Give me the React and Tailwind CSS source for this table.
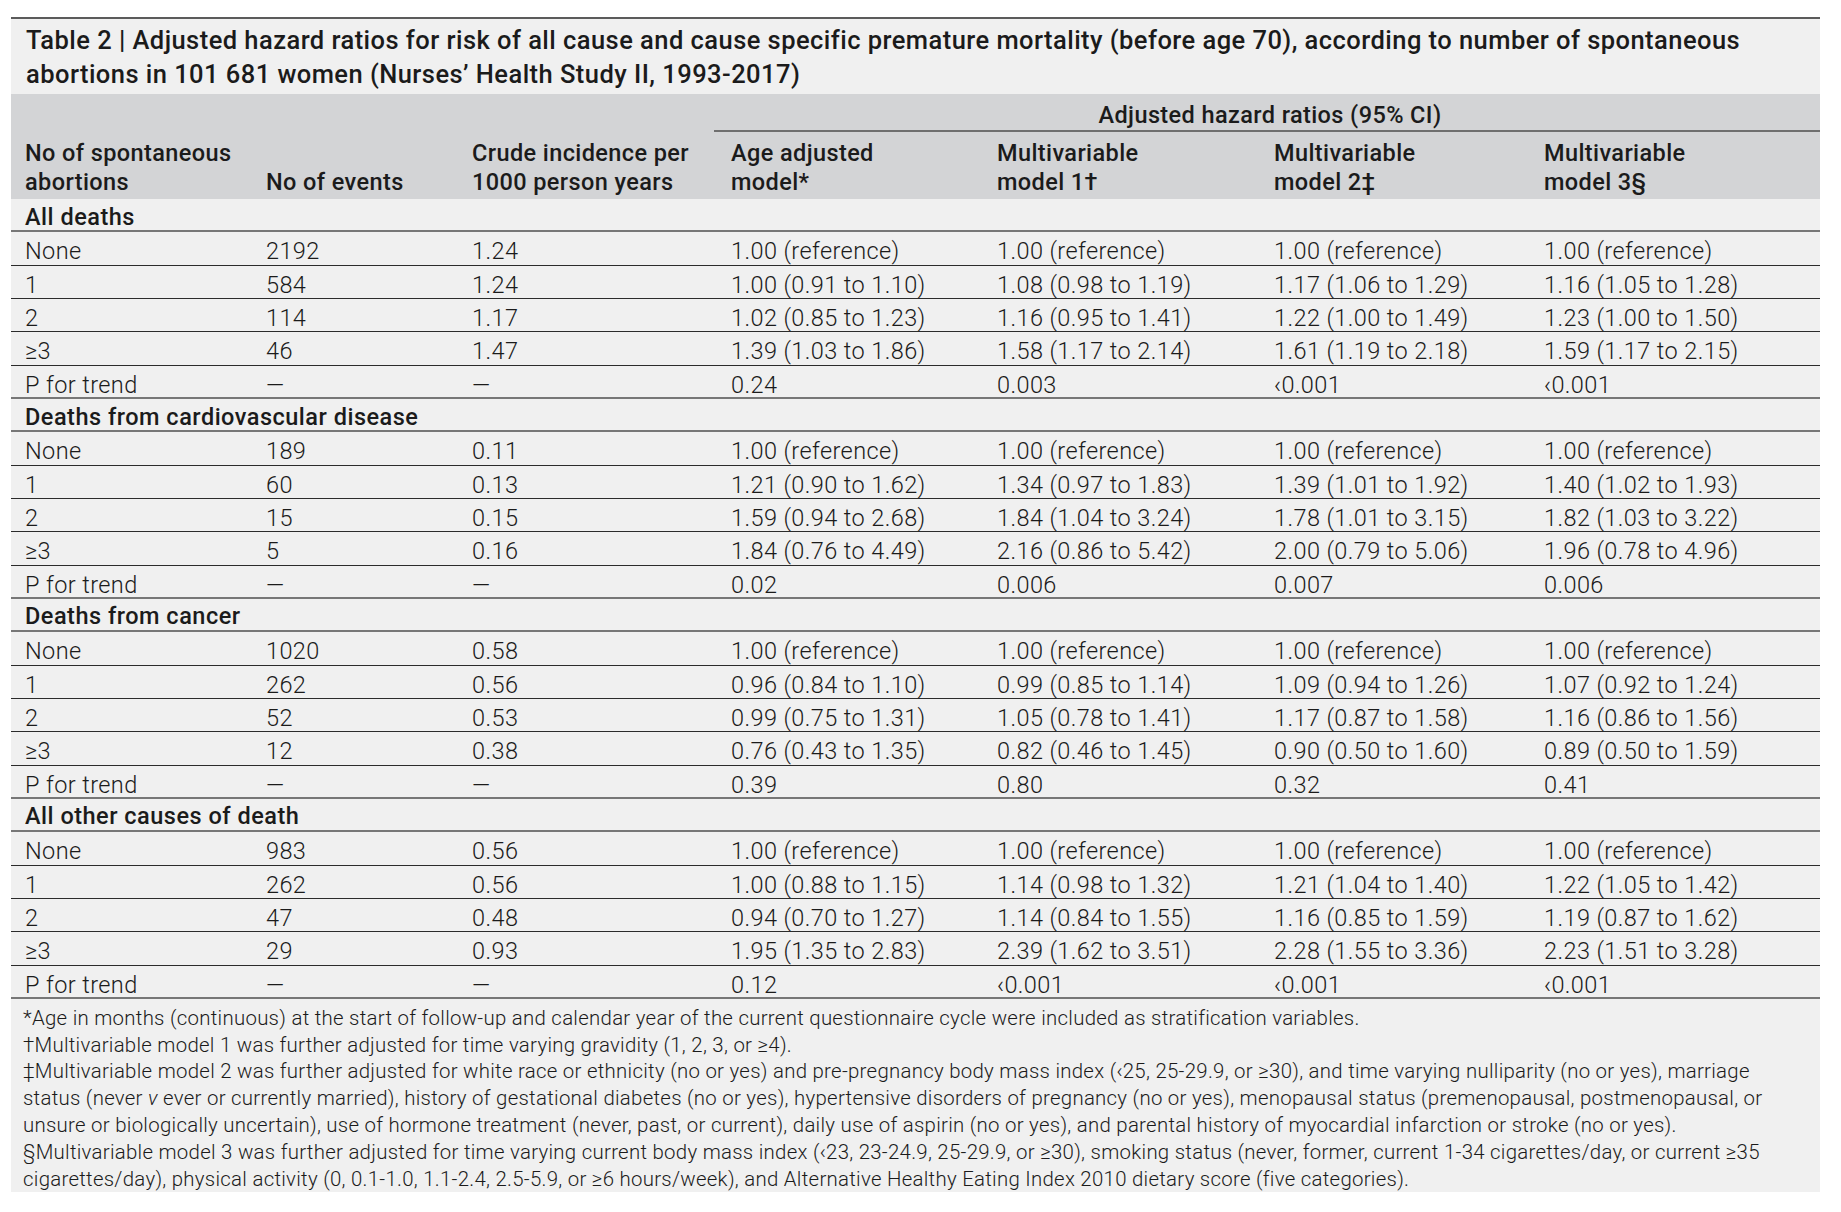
import React from 'react';

const cols = 'grid grid-cols-[241px_206px_256px_269px_277px_270px_290px]';

const REF = '1.00 (reference)';

const sections = [
  {
    title: 'All deaths',
    rows: [
      ['None', '2192', '1.24', REF, REF, REF, REF],
      ['1', '584', '1.24', '1.00 (0.91 to 1.10)', '1.08 (0.98 to 1.19)', '1.17 (1.06 to 1.29)', '1.16 (1.05 to 1.28)'],
      ['2', '114', '1.17', '1.02 (0.85 to 1.23)', '1.16 (0.95 to 1.41)', '1.22 (1.00 to 1.49)', '1.23 (1.00 to 1.50)'],
      ['≥3', '46', '1.47', '1.39 (1.03 to 1.86)', '1.58 (1.17 to 2.14)', '1.61 (1.19 to 2.18)', '1.59 (1.17 to 2.15)'],
      ['P for trend', '—', '—', '0.24', '0.003', '‹0.001', '‹0.001'],
    ],
  },
  {
    title: 'Deaths from cardiovascular disease',
    rows: [
      ['None', '189', '0.11', REF, REF, REF, REF],
      ['1', '60', '0.13', '1.21 (0.90 to 1.62)', '1.34 (0.97 to 1.83)', '1.39 (1.01 to 1.92)', '1.40 (1.02 to 1.93)'],
      ['2', '15', '0.15', '1.59 (0.94 to 2.68)', '1.84 (1.04 to 3.24)', '1.78 (1.01 to 3.15)', '1.82 (1.03 to 3.22)'],
      ['≥3', '5', '0.16', '1.84 (0.76 to 4.49)', '2.16 (0.86 to 5.42)', '2.00 (0.79 to 5.06)', '1.96 (0.78 to 4.96)'],
      ['P for trend', '—', '—', '0.02', '0.006', '0.007', '0.006'],
    ],
  },
  {
    title: 'Deaths from cancer',
    rows: [
      ['None', '1020', '0.58', REF, REF, REF, REF],
      ['1', '262', '0.56', '0.96 (0.84 to 1.10)', '0.99 (0.85 to 1.14)', '1.09 (0.94 to 1.26)', '1.07 (0.92 to 1.24)'],
      ['2', '52', '0.53', '0.99 (0.75 to 1.31)', '1.05 (0.78 to 1.41)', '1.17 (0.87 to 1.58)', '1.16 (0.86 to 1.56)'],
      ['≥3', '12', '0.38', '0.76 (0.43 to 1.35)', '0.82 (0.46 to 1.45)', '0.90 (0.50 to 1.60)', '0.89 (0.50 to 1.59)'],
      ['P for trend', '—', '—', '0.39', '0.80', '0.32', '0.41'],
    ],
  },
  {
    title: 'All other causes of death',
    rows: [
      ['None', '983', '0.56', REF, REF, REF, REF],
      ['1', '262', '0.56', '1.00 (0.88 to 1.15)', '1.14 (0.98 to 1.32)', '1.21 (1.04 to 1.40)', '1.22 (1.05 to 1.42)'],
      ['2', '47', '0.48', '0.94 (0.70 to 1.27)', '1.14 (0.84 to 1.55)', '1.16 (0.85 to 1.59)', '1.19 (0.87 to 1.62)'],
      ['≥3', '29', '0.93', '1.95 (1.35 to 2.83)', '2.39 (1.62 to 3.51)', '2.28 (1.55 to 3.36)', '2.23 (1.51 to 3.28)'],
      ['P for trend', '—', '—', '0.12', '‹0.001', '‹0.001', '‹0.001'],
    ],
  },
];

export default function App() {
  return (
    <div className="min-h-[1212px] bg-white pt-[17px] pl-[11px] font-['Roboto',sans-serif] text-[#1b1b1b]">
      <div className="w-[1809px] border-t-2 border-[#5b5b5b] bg-[#f0f0f0]">
        {/* title */}
        <div className="pl-[15px] pt-[4px] pb-[3px] text-[25.5px] leading-[34px] tracking-[0.45px] font-medium">
          <div className="whitespace-nowrap">
            Table 2 | Adjusted hazard ratios for risk of all cause and cause specific premature mortality (before age 70), according to number of spontaneous
          </div>
          <div className="whitespace-nowrap">abortions in 101 681 women (Nurses’ Health Study II, 1993-2017)</div>
        </div>

        {/* column headings */}
        <div className="bg-[#d3d4d6] font-medium text-[23.5px] tracking-[0.4px]">
          <div className={cols}>
            <div className="col-start-4 col-span-4 h-[38px] border-b-2 border-[#6f6f6f] flex items-center justify-center pt-[7px] pl-[6px]">
              Adjusted hazard ratios (95% CI)
            </div>
          </div>
          <div className={`${cols} items-end leading-[29px] pt-[7px] pb-[2px]`}>
            <div className="pl-[14px]">No of spontaneous<br />abortions</div>
            <div className="pl-[14px]">No of events</div>
            <div className="pl-[14px]">Crude incidence per<br />1000 person years</div>
            <div className="pl-[17px]">Age adjusted<br />model*</div>
            <div className="pl-[14px]">Multivariable<br />model 1†</div>
            <div className="pl-[14px]">Multivariable<br />model 2‡</div>
            <div className="pl-[14px]">Multivariable<br />model 3§</div>
          </div>
        </div>

        {/* body */}
        {sections.map((s) => (
          <div key={s.title}>
            <div className="h-[33.33px] border-b-2 border-[#777] pl-[14px] pt-[5px] flex items-center text-[23.5px] tracking-[0.5px] font-medium">
              {s.title}
            </div>
            {s.rows.map((r, i) => (
              <div
                key={i}
                className={`${cols} h-[33.33px] items-center pt-[2px] text-[23.5px] tracking-[0.4px] font-light ${
                  i === s.rows.length - 1 ? 'border-b-2 border-[#777]' : 'border-b border-[#2b2b2b]'
                }`}
              >
                {r.map((c, j) => (
                  <div key={j} className={`whitespace-nowrap ${j === 3 ? 'pl-[17px]' : 'pl-[14px]'}`}>
                    {c}
                  </div>
                ))}
              </div>
            ))}
          </div>
        ))}

        {/* footnotes */}
        <div className="pl-[12px] pt-[6px] pb-0 text-[20.4px] leading-[26.8px] tracking-[0.28px] font-light whitespace-nowrap">
          <div>*Age in months (continuous) at the start of follow-up and calendar year of the current questionnaire cycle were included as stratification variables.</div>
          <div>†Multivariable model 1 was further adjusted for time varying gravidity (1, 2, 3, or ≥4).</div>
          <div>‡Multivariable model 2 was further adjusted for white race or ethnicity (no or yes) and pre-pregnancy body mass index (‹25, 25-29.9, or ≥30), and time varying nulliparity (no or yes), marriage</div>
          <div>status (never <i>v</i> ever or currently married), history of gestational diabetes (no or yes), hypertensive disorders of pregnancy (no or yes), menopausal status (premenopausal, postmenopausal, or</div>
          <div>unsure or biologically uncertain), use of hormone treatment (never, past, or current), daily use of aspirin (no or yes), and parental history of myocardial infarction or stroke (no or yes).</div>
          <div>§Multivariable model 3 was further adjusted for time varying current body mass index (‹23, 23-24.9, 25-29.9, or ≥30), smoking status (never, former, current 1-34 cigarettes/day, or current ≥35</div>
          <div>cigarettes/day), physical activity (0, 0.1-1.0, 1.1-2.4, 2.5-5.9, or ≥6 hours/week), and Alternative Healthy Eating Index 2010 dietary score (five categories).</div>
        </div>
      </div>
    </div>
  );
}
